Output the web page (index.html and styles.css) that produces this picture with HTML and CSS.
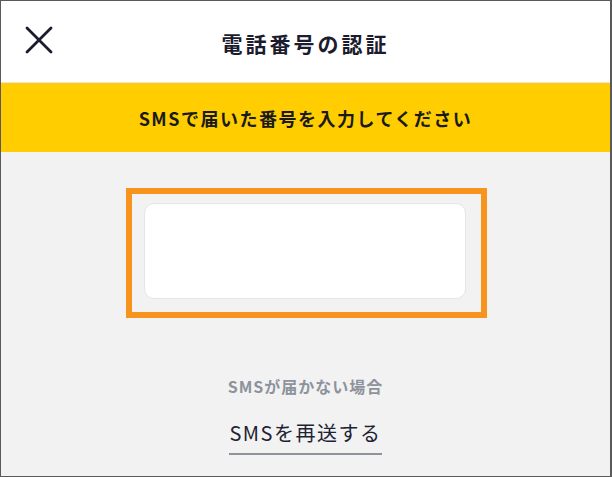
FILE: index.html
```html
<!DOCTYPE html>
<html lang="ja">
<head>
<meta charset="utf-8">
<title>電話番号の認証</title>
<link rel="stylesheet" href="styles.css">
</head>
<body>
<div class="frame">
  <header class="topbar">
    <button class="close" aria-label="閉じる">
      <svg width="28" height="28" viewBox="0 0 28 28"><path d="M2 2 L26 26 M26 2 L2 26" stroke="#1b1b2d" stroke-width="2.8" stroke-linecap="round" fill="none"/></svg>
    </button>
    <h1 class="title">電話番号の認証</h1>
    <span class="spacer"></span>
  </header>
  <div class="notice">SMSで届いた番号を入力してください</div>
  <main class="content">
    <div class="highlight">
      <div class="code-input"></div>
    </div>
    <p class="help">SMSが届かない場合</p>
    <a class="resend">SMSを再送する</a>
  </main>
</div>
</body>
</html>
```

FILE: styles.css
```css
* { box-sizing: border-box; }
html, body { margin: 0; padding: 0; }
body {
  font-family: "Noto Sans CJK JP", "Noto Sans", sans-serif;
  background: #f2f2f2;
}
.frame {
  width: 612px;
  height: 477px;
  border: 1px solid #5a5a5a;
  border-right-width: 2px;
  display: flex;
  flex-direction: column;
  background: #f2f2f2;
  overflow: hidden;
}
.topbar {
  height: 82px;
  flex: none;
  background: #fff;
  border-bottom: 1px solid #e6e6e6;
  display: grid;
  grid-template-columns: 80px 1fr 80px;
  align-items: center;
}
.close {
  border: 0;
  background: none;
  padding: 0;
  margin: 0 0 4px 24px;
  width: 28px;
  height: 28px;
  display: flex;
}
.title {
  margin: 0;
  text-align: center;
  font-size: 21px;
  font-weight: 700;
  letter-spacing: 3px;
  color: #1c1c2e;
  line-height: 30px;
  padding-top: 2px;
}
.notice {
  height: 69px;
  flex: none;
  background: #ffcd00;
  display: flex;
  align-items: center;
  justify-content: center;
  font-size: 18px;
  letter-spacing: 1.5px;
  font-weight: 700;
  color: #1a1a1a;
}
.content {
  flex: 1;
  display: flex;
  flex-direction: column;
  align-items: center;
  padding-top: 36px;
}
.highlight {
  border: 6px solid #f7941d;
  padding: 9px 15px 13px 12px;
  margin-left: 2px;
}
.code-input {
  width: 322px;
  height: 96px;
  background: #fff;
  border: 1.5px solid #e4e5e9;
  border-radius: 10px;
}
.help {
  margin: 56px 0 0;
  font-size: 16px;
  letter-spacing: 1px;
  line-height: 24px;
  font-weight: 700;
  color: #8d929c;
}
.resend {
  margin-top: 21px;
  font-size: 20px;
  letter-spacing: 1.5px;
  line-height: 28px;
  color: #1f2233;
  padding: 0 0 6px;
  border-bottom: 2px solid #8f939c;
}
```
